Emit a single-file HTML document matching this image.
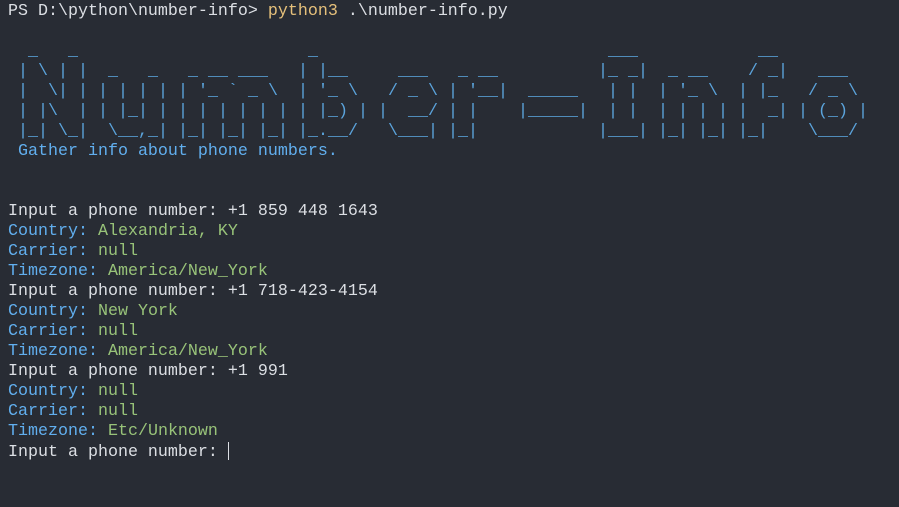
<!DOCTYPE html>
<html><head><meta charset="utf-8"><style>
html,body{margin:0;padding:0;}
body{width:899px;height:507px;background:#282c34;overflow:hidden;position:relative;
font-family:"Liberation Mono","DejaVu Sans Mono",monospace;font-size:16.67px;color:#dcdfe4;}
.l{position:absolute;left:8px;height:20px;line-height:20px;white-space:pre;}
pre{position:absolute;margin:0;font:inherit;line-height:20px;color:#5ba4dc;top:42px;}
.b{color:#61afef}.g{color:#98c379}.y{color:#e5c07b}
.cur{display:inline-block;width:1px;height:18px;background:#dcdfe4;vertical-align:-4px;}
</style></head><body>
<div class="l" style="top:2px">PS D:\python\number-info&gt; <span class="y">python3</span> .\number-info.py</div>
<pre style="left:18px"> _   _ 
| \ | |
|  \| |
| |\  |
|_| \_|</pre>
<pre style="left:98px">       
 _   _ 
| | | |
| |_| |
 \__,_|</pre>
<pre style="left:178px">           
 _ __ ___  
| '_ ` _ \ 
| | | | | |
|_| |_| |_|</pre>
<pre style="left:298px"> _     
| |__  
| '_ \ 
| |_) |
|_.__/ </pre>
<pre style="left:378px">      
  ___ 
 / _ \
|  __/
 \___|</pre>
<pre style="left:448px">      
 _ __ 
| '__|
| |   
|_|   </pre>
<pre style="left:518px">       
       
 _____ 
|_____|
       </pre>
<pre style="left:598px"> ___ 
|_ _|
 | | 
 | | 
|___|</pre>
<pre style="left:658px">       
 _ __  
| '_ \ 
| | | |
|_| |_|</pre>
<pre style="left:738px">  __ 
 / _|
| |_ 
|  _|
|_|  </pre>
<pre style="left:798px">       
  ___  
 / _ \ 
| (_) |
 \___/ </pre>
<div class="l b" style="top:142px"> Gather info about phone numbers.</div>
<div class="l" style="top:202px">Input a phone number: +1 859 448 1643</div>
<div class="l" style="top:222px"><span class="b">Country:</span> <span class="g">Alexandria, KY</span></div>
<div class="l" style="top:242px"><span class="b">Carrier:</span> <span class="g">null</span></div>
<div class="l" style="top:262px"><span class="b">Timezone:</span> <span class="g">America/New_York</span></div>
<div class="l" style="top:282px">Input a phone number: +1 718-423-4154</div>
<div class="l" style="top:302px"><span class="b">Country:</span> <span class="g">New York</span></div>
<div class="l" style="top:322px"><span class="b">Carrier:</span> <span class="g">null</span></div>
<div class="l" style="top:342px"><span class="b">Timezone:</span> <span class="g">America/New_York</span></div>
<div class="l" style="top:362px">Input a phone number: +1 991</div>
<div class="l" style="top:382px"><span class="b">Country:</span> <span class="g">null</span></div>
<div class="l" style="top:402px"><span class="b">Carrier:</span> <span class="g">null</span></div>
<div class="l" style="top:422px"><span class="b">Timezone:</span> <span class="g">Etc/Unknown</span></div>
<div class="l" style="top:442px">Input a phone number: <span class="cur"></span></div>
</body></html>
